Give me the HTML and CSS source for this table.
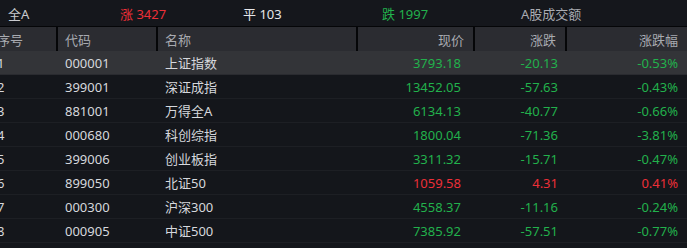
FILE: index.html
```html
<!DOCTYPE html>
<html lang="zh">
<head>
<meta charset="utf-8">
<link rel="stylesheet" href="styles.css">
</head>
<body>
<div class="app">
  <div class="summary">
    <span class="s s1">全A</span>
    <span class="s s2 up">涨 3427</span>
    <span class="s s3">平 103</span>
    <span class="s s4 down">跌 1997</span>
    <span class="s s5 label">A股成交额</span>
  </div>
  <div class="grid">
    <div class="row head">
      <div class="c c1">序号</div>
      <div class="c c2">代码</div>
      <div class="c c3">名称</div>
      <div class="c c4 r">现价</div>
      <div class="c c5 r">涨跌</div>
      <div class="c c6 r">涨跌幅</div>
    </div>
    <div class="row sel">
      <div class="c c1">1</div><div class="c c2">000001</div><div class="c c3">上证指数</div>
      <div class="c c4 r v down">3793.18</div><div class="c c5 r down">-20.13</div><div class="c c6 r down">-0.53%</div>
    </div>
    <div class="row">
      <div class="c c1">2</div><div class="c c2">399001</div><div class="c c3">深证成指</div>
      <div class="c c4 r v down">13452.05</div><div class="c c5 r down">-57.63</div><div class="c c6 r down">-0.43%</div>
    </div>
    <div class="row">
      <div class="c c1">3</div><div class="c c2">881001</div><div class="c c3">万得全A</div>
      <div class="c c4 r v down">6134.13</div><div class="c c5 r down">-40.77</div><div class="c c6 r down">-0.66%</div>
    </div>
    <div class="row">
      <div class="c c1">4</div><div class="c c2">000680</div><div class="c c3">科创综指</div>
      <div class="c c4 r v down">1800.04</div><div class="c c5 r down">-71.36</div><div class="c c6 r down">-3.81%</div>
    </div>
    <div class="row">
      <div class="c c1">5</div><div class="c c2">399006</div><div class="c c3">创业板指</div>
      <div class="c c4 r v down">3311.32</div><div class="c c5 r down">-15.71</div><div class="c c6 r down">-0.47%</div>
    </div>
    <div class="row">
      <div class="c c1">6</div><div class="c c2">899050</div><div class="c c3">北证50</div>
      <div class="c c4 r v up">1059.58</div><div class="c c5 r up">4.31</div><div class="c c6 r up">0.41%</div>
    </div>
    <div class="row">
      <div class="c c1">7</div><div class="c c2">000300</div><div class="c c3">沪深300</div>
      <div class="c c4 r v down">4558.37</div><div class="c c5 r down">-11.16</div><div class="c c6 r down">-0.24%</div>
    </div>
    <div class="row">
      <div class="c c1">8</div><div class="c c2">000905</div><div class="c c3">中证500</div>
      <div class="c c4 r v down">7385.92</div><div class="c c5 r down">-57.51</div><div class="c c6 r down">-0.77%</div>
    </div>
  </div>
</div>
</body>
</html>
```
FILE: styles.css
```css
html, body {
  margin: 0;
  padding: 0;
  background: #14161b;
  overflow: hidden;
}
.app {
  width: 687px;
  height: 248px;
  overflow: hidden;
  font-family: "Noto Sans", "Noto Sans CJK SC", sans-serif;
  font-size: 13px;
  color: #d6d8dd;
}
.summary {
  display: flex;
  height: 26px;
  align-items: center;
  background: #15171c;
  border-bottom: 1px solid #050608;
  padding-left: 8px;
}
.s { white-space: nowrap; }
.s1 { width: 112px; color: #c9cbd0; }
.s2 { width: 123px; }
.s3 { width: 139px; color: #e6e7ea; }
.s4 { width: 139px; }
.s5 { color: #a9abb2; }
.up { color: #ec2f38; }
.down { color: #22b14c; }
.grid {
  margin-left: -8px;
}
.row {
  display: flex;
  height: 23px;
  border-bottom: 1px solid #1d1f24;
  align-items: center;
}
.row.head {
  height: 24px;
  background: #2b2c31;
  border-bottom: none;
  color: #a8aab0;
}
.row.sel { background: #333438; border-bottom-color: #2a2b30; }
.c {
  box-sizing: border-box;
  height: 100%;
  display: flex;
  align-items: center;
  padding: 0 6px;
  white-space: nowrap;
}
.head .c { border-right: 2px solid #050608; }
.head .c6 { border-right: none; }
.r { justify-content: flex-end; padding-right: 9px; }
.c1 { width: 66px; padding-left: 5px; }
.c2 { width: 100px; padding-left: 7px; }
.c3 { width: 200px; padding-left: 7px; }
.c4 { width: 117px; }
.c5 { width: 92px; }
.c6 { width: 120px; }
.row:not(.head) .c4 { padding-right: 14px; }
```
